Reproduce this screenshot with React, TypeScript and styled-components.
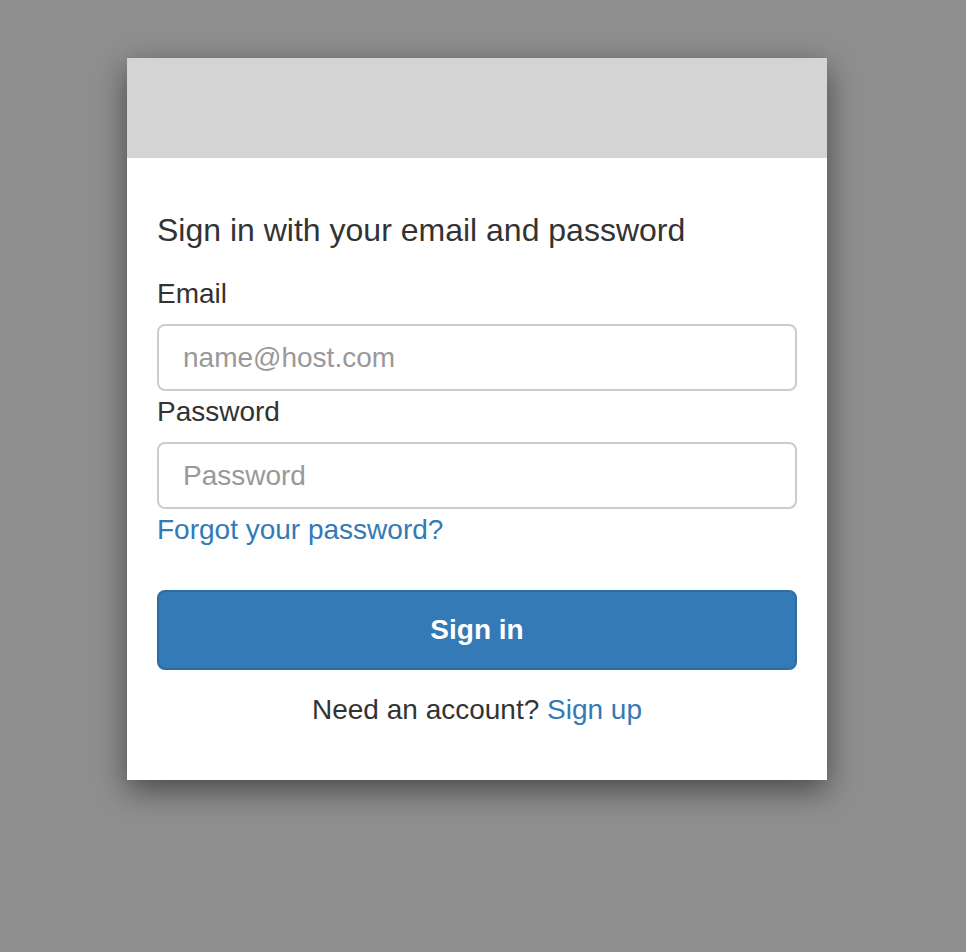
import React from "react";
import styled, { createGlobalStyle } from "styled-components";

const GlobalStyles = createGlobalStyle`
  html,
  body {
    margin: 0;
    background: #8f8f8f;
  }

  body {
    font-family: "Liberation Sans", Arial, Helvetica, sans-serif;
    color: #333;
  }

  * {
    box-sizing: border-box;
  }
`;

const Page = styled.div`
  min-height: 100vh;
  padding: 58px 0 0 127px;
`;

const Card = styled.div`
  width: 700px;
  background: #fff;
  box-shadow: 0 10px 30px rgba(0, 0, 0, 0.5);
`;

const Banner = styled.div`
  height: 100px;
  background: #d4d4d4;
`;

const Body = styled.form`
  display: flex;
  flex-direction: column;
  padding: 52px 30px 50px;
`;

const Heading = styled.div`
  font-size: 32px;
  line-height: 40px;
  margin-bottom: 23px;
`;

const Label = styled.label`
  font-size: 28px;
  line-height: 40px;
  padding-top: 1px;
  margin-bottom: 10px;
`;

const Input = styled.input`
  width: 100%;
  height: 67px;
  padding: 0 24px;
  border: 2px solid #ccc;
  border-radius: 8px;
  font: inherit;
  font-size: 28px;
  color: #555;
  outline: none;

  &::placeholder {
    color: #999;
  }
`;

const Link = styled.a`
  color: #337ab7;
  text-decoration: none;
  cursor: pointer;
`;

const Forgot = styled(Link)`
  font-size: 28px;
  line-height: 40px;
  padding-top: 1px;
  align-self: flex-start;
  margin-bottom: 40px;
`;

const Button = styled.button`
  height: 80px;
  border: 2px solid #2e6da4;
  border-radius: 8px;
  background: #337ab7;
  color: #fff;
  font: inherit;
  font-size: 28px;
  font-weight: bold;
  cursor: pointer;
`;

const Footer = styled.div`
  margin-top: 20px;
  font-size: 28px;
  line-height: 40px;
  text-align: center;
`;

const App: React.FC = () => {
  return (
    <Page>
      <GlobalStyles />
      <Card>
        <Banner />
        <Body onSubmit={e => e.preventDefault()}>
          <Heading>Sign in with your email and password</Heading>
          <Label htmlFor="email">Email</Label>
          <Input id="email" type="email" placeholder="name@host.com" />
          <Label htmlFor="password">Password</Label>
          <Input id="password" type="password" placeholder="Password" />
          <Forgot>Forgot your password?</Forgot>
          <Button type="submit">Sign in</Button>
          <Footer>
            Need an account? <Link>Sign up</Link>
          </Footer>
        </Body>
      </Card>
    </Page>
  );
};

export default App;
